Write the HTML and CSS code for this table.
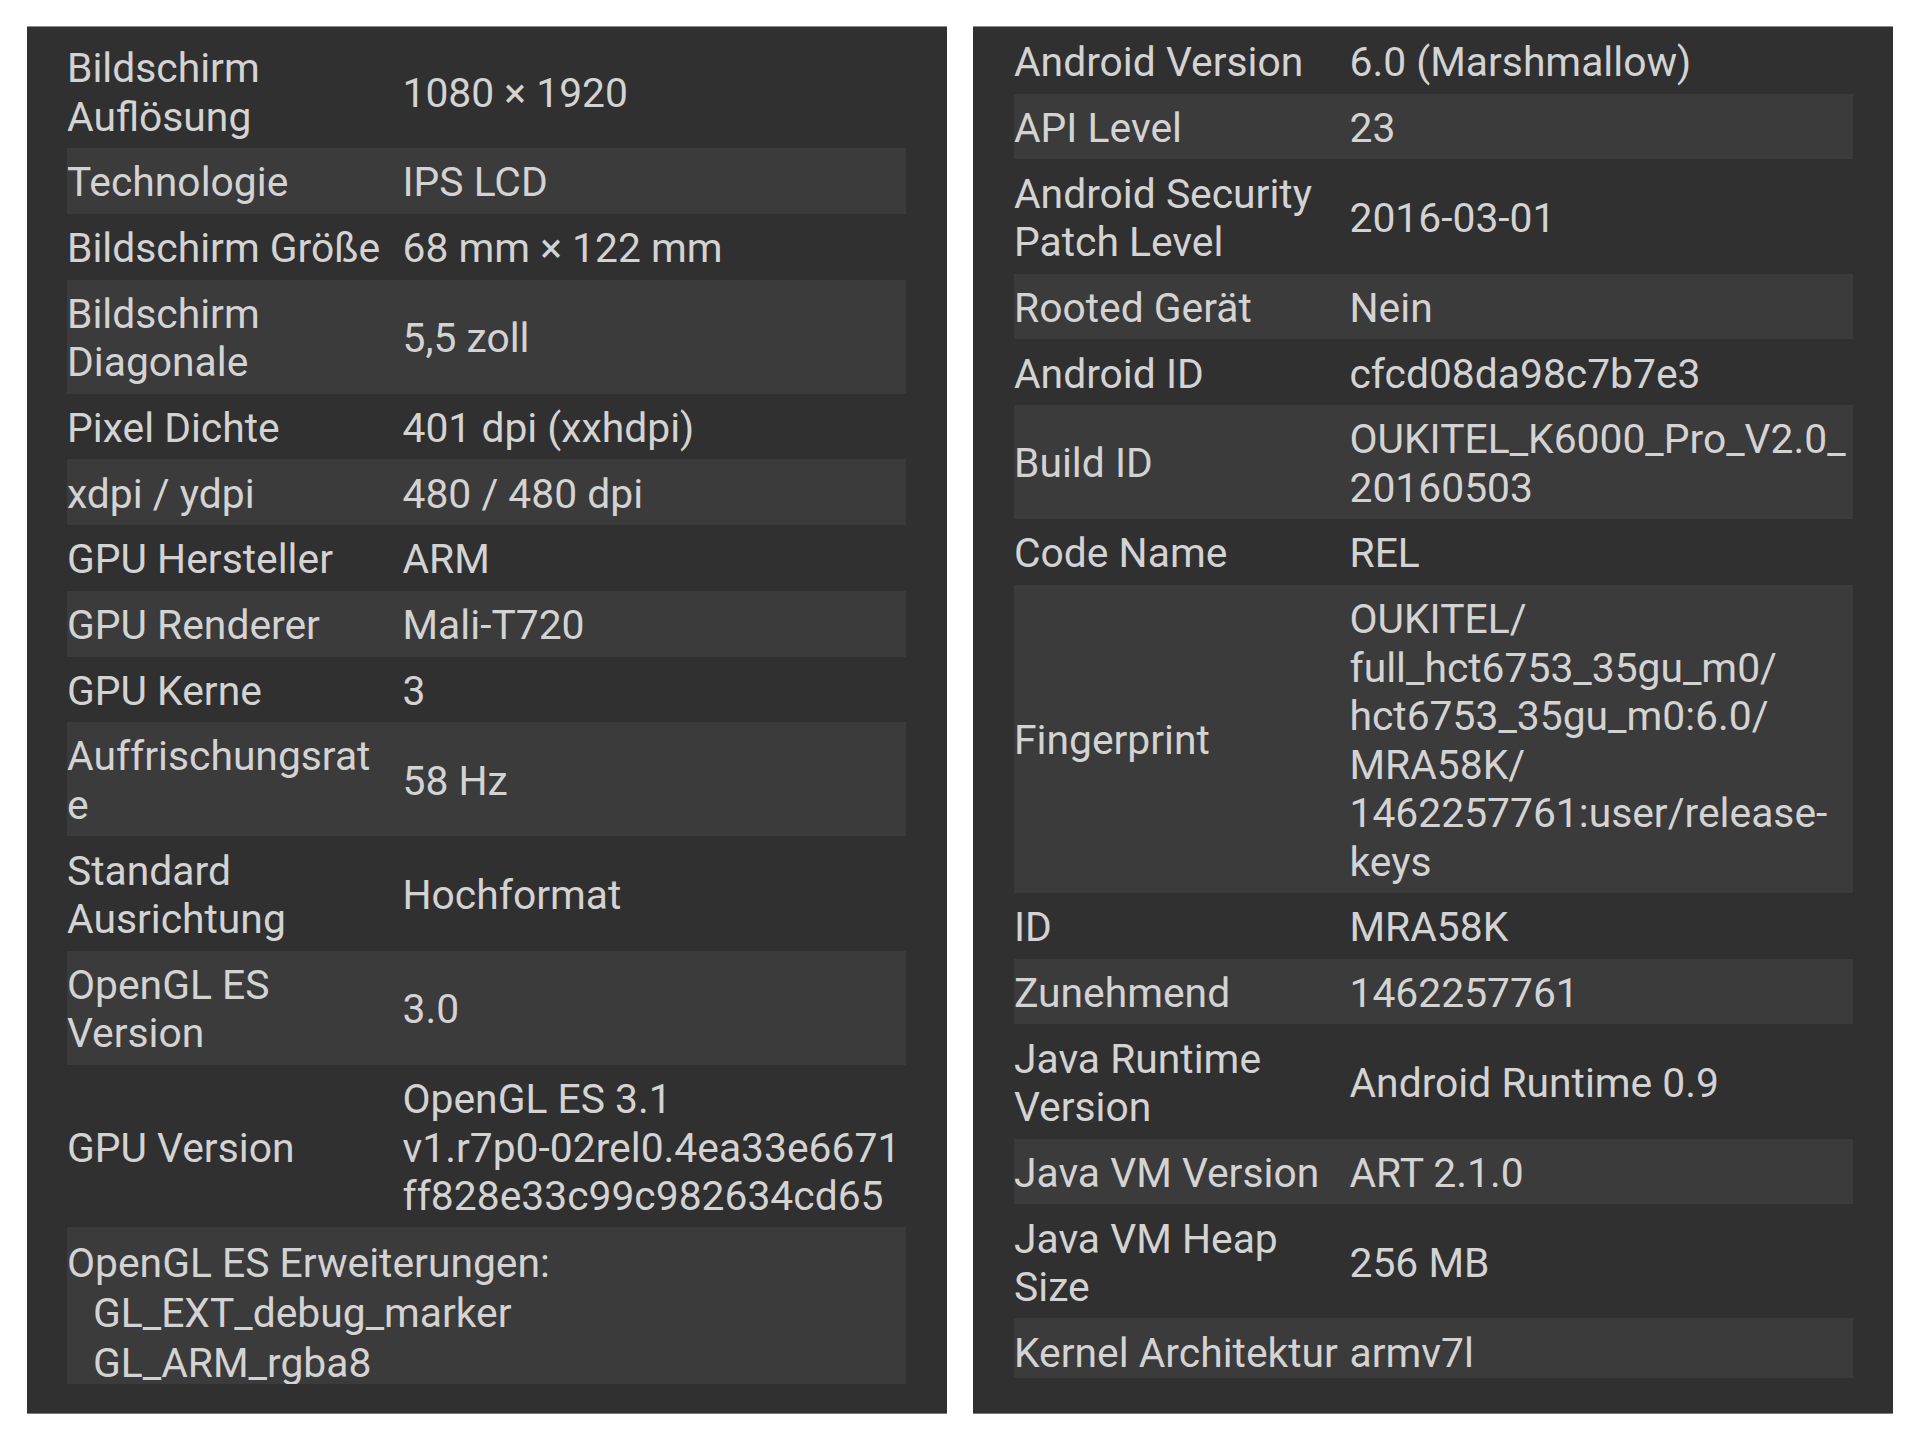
FILE: index.html
```html
<!DOCTYPE html>
<html lang="de">
<head>
<meta charset="utf-8">
<title>Geräteinformationen</title>
<link rel="stylesheet" href="styles.css">
</head>
<body>
<main class="page">
  <section class="panel panel-left">
    <div class="viewport">
      <div class="row"><div class="label">Bildschirm<br>Auflösung</div><div class="value">1080 × 1920</div></div>
      <div class="row"><div class="label">Technologie</div><div class="value">IPS LCD</div></div>
      <div class="row"><div class="label">Bildschirm Größe</div><div class="value">68 mm × 122 mm</div></div>
      <div class="row"><div class="label">Bildschirm<br>Diagonale</div><div class="value">5,5 zoll</div></div>
      <div class="row"><div class="label">Pixel Dichte</div><div class="value">401 dpi (xxhdpi)</div></div>
      <div class="row"><div class="label">xdpi / ydpi</div><div class="value">480 / 480 dpi</div></div>
      <div class="row"><div class="label">GPU Hersteller</div><div class="value">ARM</div></div>
      <div class="row"><div class="label">GPU Renderer</div><div class="value">Mali-T720</div></div>
      <div class="row"><div class="label">GPU Kerne</div><div class="value">3</div></div>
      <div class="row"><div class="label">Auffrischungsrat<br>e</div><div class="value">58 Hz</div></div>
      <div class="row"><div class="label">Standard<br>Ausrichtung</div><div class="value">Hochformat</div></div>
      <div class="row"><div class="label">OpenGL ES<br>Version</div><div class="value">3.0</div></div>
      <div class="row"><div class="label">GPU Version</div><div class="value">OpenGL ES 3.1<br>v1.r7p0-02rel0.4ea33e6671<br>ff828e33c99c982634cd65</div></div>
      <div class="row row-block">
        <div class="block-title">OpenGL ES Erweiterungen:</div>
        <div class="block-item">GL_EXT_debug_marker</div>
        <div class="block-item">GL_ARM_rgba8</div>
      </div>
    </div>
  </section>
  <section class="panel panel-right">
    <div class="viewport">
      <div class="row"><div class="label">Android Version</div><div class="value">6.0 (Marshmallow)</div></div>
      <div class="row"><div class="label">API Level</div><div class="value">23</div></div>
      <div class="row"><div class="label">Android Security<br>Patch Level</div><div class="value">2016-03-01</div></div>
      <div class="row"><div class="label">Rooted Gerät</div><div class="value">Nein</div></div>
      <div class="row"><div class="label">Android ID</div><div class="value">cfcd08da98c7b7e3</div></div>
      <div class="row"><div class="label">Build ID</div><div class="value">OUKITEL_K6000_Pro_V2.0_<br>20160503</div></div>
      <div class="row"><div class="label">Code Name</div><div class="value">REL</div></div>
      <div class="row"><div class="label">Fingerprint</div><div class="value">OUKITEL/<br>full_hct6753_35gu_m0/<br>hct6753_35gu_m0:6.0/<br>MRA58K/<br>1462257761:user/release-<br>keys</div></div>
      <div class="row"><div class="label">ID</div><div class="value">MRA58K</div></div>
      <div class="row"><div class="label">Zunehmend</div><div class="value">1462257761</div></div>
      <div class="row"><div class="label">Java Runtime<br>Version</div><div class="value">Android Runtime 0.9</div></div>
      <div class="row"><div class="label">Java VM Version</div><div class="value">ART 2.1.0</div></div>
      <div class="row"><div class="label">Java VM Heap<br>Size</div><div class="value">256 MB</div></div>
      <div class="row"><div class="label">Kernel Architektur</div><div class="value">armv7l</div></div>
    </div>
  </section>
</main>
</body>
</html>
```

FILE: styles.css
```css
html, body {
  margin: 0;
  padding: 0;
  background: #ffffff;
}

.page {
  display: flex;
  gap: 26px;
  padding: 26px 27px 27px 27px;
  box-sizing: border-box;
  width: 1920px;
  height: 1441px;
}

.panel {
  width: 920px;
  height: 1388px;
  flex: 0 0 920px;
  box-sizing: border-box;
  background: #303030;
  border-top: 1px solid #8c8c8c;
  border-bottom: 1px solid #7a7a7a;
}

.panel-left {
  padding: 7px 41px 0 40px;
}

.panel-right {
  padding: 1px 40px 0 41px;
}

.viewport {
  height: 1350px;
  overflow: hidden;
  display: flex;
  flex-direction: column;
}

.row {
  display: flex;
  align-items: center;
  flex: 0 0 auto;
  padding: 10.3px 0 6.9px 0;
  font-family: Roboto, "Liberation Sans", sans-serif;
  font-size: 40.8px;
  line-height: 48.5px;
  color: #d3d3d3;
}

.row:nth-child(even) {
  background: #3b3b3b;
}

.label {
  flex: 0 0 335.5px;
  width: 335.5px;
}

.value {
  flex: 1 1 auto;
  min-width: 0;
  white-space: nowrap;
}

.row-block {
  display: block;
  padding-top: 10.5px;
  line-height: 50px;
}

.block-item {
  padding-left: 26px;
}
```
